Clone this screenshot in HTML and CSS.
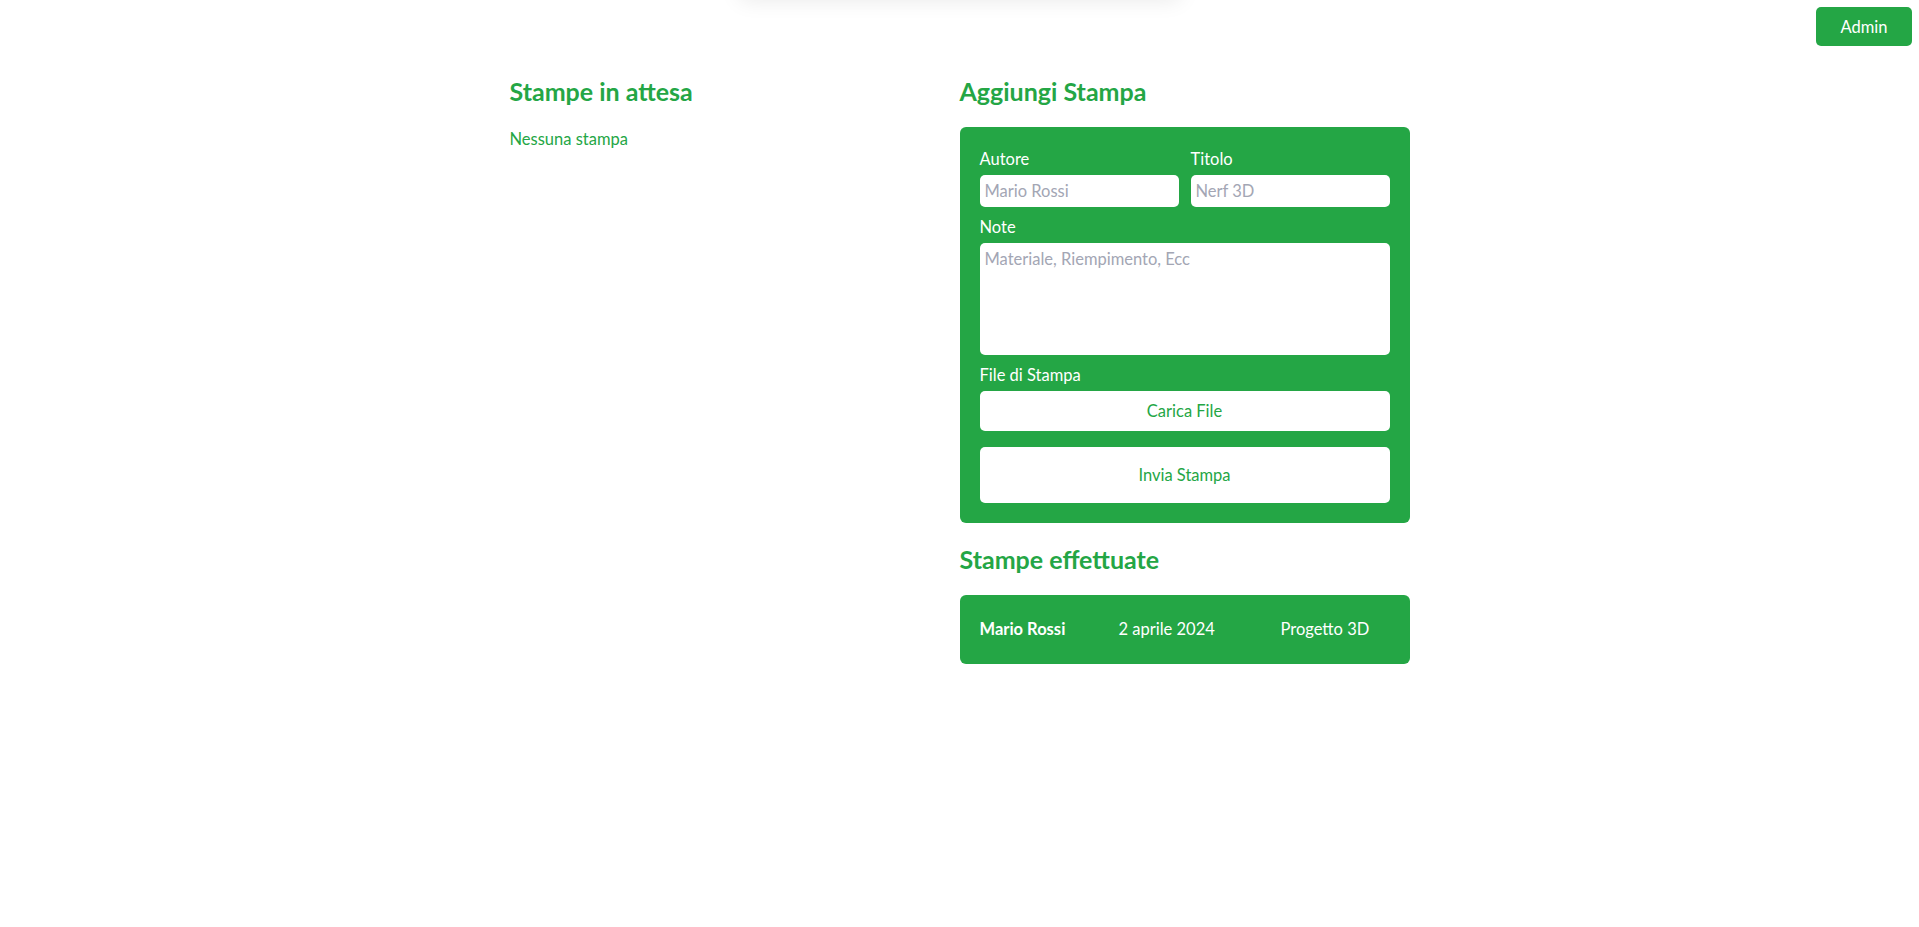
FILE: index.html
```html
<!DOCTYPE html>
<html lang="it">
<head>
<meta charset="utf-8">
<title>Stampe</title>
<link rel="stylesheet" href="styles.css">
</head>
<body>
<div class="toast-shadow"></div>
<header class="topbar">
  <button class="admin-btn">Admin</button>
</header>
<main class="layout">
  <section class="col">
    <h2 class="title">Stampe in attesa</h2>
    <p class="empty">Nessuna stampa</p>
  </section>
  <section class="col">
    <h2 class="title">Aggiungi Stampa</h2>
    <form class="card form">
      <div class="row">
        <div class="field">
          <label class="label">Autore</label>
          <input class="input" type="text" placeholder="Mario Rossi">
        </div>
        <div class="field">
          <label class="label">Titolo</label>
          <input class="input" type="text" placeholder="Nerf 3D">
        </div>
      </div>
      <div class="field">
        <label class="label">Note</label>
        <textarea class="input textarea" placeholder="Materiale, Riempimento, Ecc"></textarea>
      </div>
      <div class="field">
        <label class="label">File di Stampa</label>
        <button type="button" class="white-btn upload">Carica File</button>
      </div>
      <button type="button" class="white-btn submit">Invia Stampa</button>
    </form>
    <h2 class="title">Stampe effettuate</h2>
    <div class="card done">
      <span class="done-author">Mario Rossi</span>
      <span class="done-date">2 aprile 2024</span>
      <span class="done-title">Progetto 3D</span>
    </div>
  </section>
</main>
</body>
</html>
```
FILE: styles.css
```css
* { box-sizing: border-box; }
html, body { margin: 0; padding: 0; background: #ffffff; }
body {
  font-family: "Lato", "Noto Sans", sans-serif;
  font-size: 16.5px;
  line-height: 24px;
  color: #24a645;
}
.toast-shadow {
  position: fixed;
  top: -60px;
  left: 50%;
  width: 440px;
  height: 60px;
  margin-left: -220px;
  background: #fff;
  box-shadow: 0 0 22px rgba(0, 0, 0, 0.09);
}
.topbar {
  display: flex;
  justify-content: flex-end;
  padding: 7px 7px 0;
}
.admin-btn {
  width: 96px;
  height: 39px;
  border: none;
  border-radius: 5px;
  background: #24a645;
  color: #fff;
  font-family: inherit;
  font-size: 16.5px;
}
.layout {
  width: 900px;
  margin: 29px auto 0;
  display: grid;
  grid-template-columns: 450px 450px;
}
.col { display: flex; flex-direction: column; }
.title {
  margin: 0 0 20px;
  font-size: 25px;
  line-height: 32px;
  font-weight: 700;
  color: #24a645;
}
.empty { margin: 0; }
.card {
  background: #24a645;
  border-radius: 6px;
  color: #fff;
}
.form {
  padding: 20px;
  margin: 0 0 20px;
  display: flex;
  flex-direction: column;
  gap: 8px;
}
.row {
  display: grid;
  grid-template-columns: 1fr 1fr;
  gap: 12px;
}
.field { display: flex; flex-direction: column; gap: 4px; min-width: 0; }
.label { color: #fff; }
.input {
  width: 100%;
  min-width: 0;
  height: 32px;
  border: none;
  border-radius: 5px;
  background: #fff;
  padding: 0 5px;
  font-family: inherit;
  font-size: 16.5px;
  line-height: 24px;
  color: #333;
  outline: none;
}
.input::placeholder { color: #a3a6b4; }
.textarea {
  height: 112px;
  padding: 4px 5px;
  resize: none;
}
.white-btn {
  border: none;
  border-radius: 5px;
  background: #fff;
  color: #24a645;
  font-family: inherit;
  font-size: 16.5px;
}
.upload { height: 40px; }
.submit { height: 56px; margin-top: 8px; }
.done {
  display: grid;
  grid-template-columns: 139px 162px auto;
  padding: 22px 20px;
  line-height: 25px;
}
.done-author { font-weight: 700; }
```
